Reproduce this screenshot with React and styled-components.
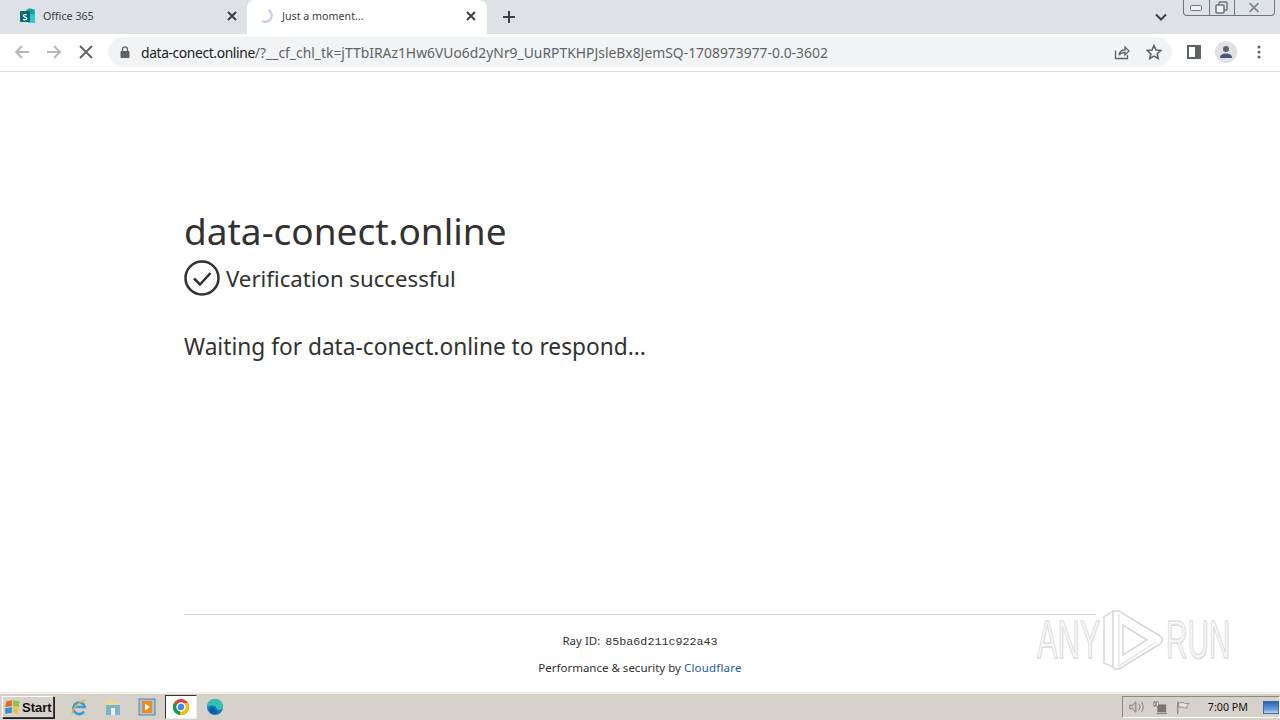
import styled, { createGlobalStyle } from 'styled-components';

const GlobalStyle = createGlobalStyle`
  html, body {
    margin: 0;
    padding: 0;
    height: 100%;
    overflow: hidden;
    background: #fff;
  }
  #root {
    height: 100%;
  }
`;

const UI_FONT = `"Noto Sans", "Open Sans", sans-serif`;

const Screen = styled.div`
  width: 1280px;
  height: 720px;
  display: flex;
  flex-direction: column;
  font-family: ${UI_FONT};
  position: relative;
  overflow: hidden;
`;

const TabStrip = styled.div`
  height: 34px;
  flex: none;
  background: #dee1e6;
  display: flex;
  align-items: flex-end;
  padding-left: 8px;
  position: relative;
`;

const Tab = styled.div`
  width: 240px;
  height: 34px;
  display: flex;
  align-items: center;
  padding: 0 8px 2px 12px;
  margin-left: ${({ $active }) => ($active ? '-1px' : '0')};
  box-sizing: border-box;
  border-radius: 8px 8px 0 0;
  background: ${({ $active }) => ($active ? '#fff' : 'transparent')};
  gap: 7px;
`;

const TabTitle = styled.span`
  flex: 1;
  font-size: 10.7px;
  color: #3c4043;
  white-space: nowrap;
`;

const CloseTab = styled.svg`
  width: 10px;
  height: 10px;
  flex: none;
  margin-right: 3px;
`;

const NewTab = styled.svg`
  width: 14px;
  height: 14px;
  align-self: center;
  margin-left: 15px;
`;

const TabListArrow = styled.svg`
  position: absolute;
  left: 1155px;
  top: 13px;
  width: 12px;
  height: 8px;
`;

const WindowControls = styled.div`
  position: absolute;
  left: 1183px;
  top: 0;
  width: 92px;
  height: 16px;
  box-sizing: border-box;
  border: 1px solid #70757c;
  border-top: none;
  border-radius: 0 0 4px 4px;
  display: grid;
  grid-template-columns: 25px 25px 1fr;
  align-items: center;
  justify-items: center;
`;

const ControlCell = styled.div`
  height: 100%;
  width: 100%;
  display: flex;
  align-items: center;
  justify-content: center;
  border-right: ${({ $last }) => ($last ? 'none' : '1px solid #70757c')};
`;

const Toolbar = styled.div`
  height: 38px;
  flex: none;
  box-sizing: border-box;
  background: #fff;
  border-bottom: 1px solid #dadce0;
  display: flex;
  align-items: center;
  padding: 0 0 2px 14px;
`;

const NavIcon = styled.svg`
  width: 16px;
  height: 16px;
  flex: none;
  margin-right: ${({ $gap }) => $gap || 16}px;
`;

const Omnibox = styled.div`
  width: 1064px;
  height: 30px;
  flex: none;
  box-sizing: border-box;
  border-radius: 15px;
  background: #f1f3f4;
  display: flex;
  align-items: center;
  padding: 0 10px 0 12px;
  margin-left: -1px;
`;

const Url = styled.div`
  flex: 1;
  margin-left: 11px;
  padding-top: 2px;
  font-size: 13.85px;
  letter-spacing: 0.02px;
  color: #5f6368;
  white-space: nowrap;
  overflow: hidden;
`;

const UrlHost = styled.span`
  color: #202124;
  letter-spacing: -0.38px;
`;

const OmniActions = styled.div`
  display: flex;
  align-items: center;
  gap: 16px;
`;

const ToolActions = styled.div`
  display: flex;
  align-items: center;
  gap: 14px;
  margin-left: 15px;
`;

const Avatar = styled.div`
  width: 22px;
  height: 22px;
  border-radius: 50%;
  background: #dfe1e5;
  display: flex;
  align-items: center;
  justify-content: center;
`;

const Page = styled.main`
  flex: 1;
  display: flex;
  flex-direction: column;
  background: #fff;
  padding: 134px 184px 0;
  color: #313131;
  min-height: 0;
`;

const Heading = styled.h1`
  margin: 0;
  font-size: 37px;
  line-height: 50px;
  font-weight: 400;
`;

const StatusRow = styled.div`
  display: flex;
  align-items: center;
  gap: 6px;
  margin-top: 2px;
  height: 40px;
`;

const StatusText = styled.span`
  font-size: 22.2px;
`;

const Waiting = styled.p`
  margin: 33px 0 0;
  font-size: 22.7px;
  line-height: 32px;
`;

const Footer = styled.footer`
  margin-top: auto;
  border-top: 1px solid #d9d9d9;
  margin-bottom: 15px;
  padding-top: 17px;
  text-align: center;
  font-size: 11.5px;
  color: #313131;
`;

const FooterLine = styled.div`
  line-height: 18px;
  margin-bottom: 8px;
  &:last-child {
    margin-bottom: 0;
  }
`;

const RayCode = styled.code`
  font-family: "Liberation Mono", monospace;
  font-size: 11.7px;
  margin-left: 2px;
`;

const FooterLink = styled.a`
  color: #1d5d9d;
  letter-spacing: 0.2px;
  text-decoration: none;
`;

const Watermark = styled.div`
  position: absolute;
  left: 1037px;
  top: 608px;
  display: flex;
  align-items: center;
  gap: 2px;
`;

const WatermarkText = styled.span`
  display: block;
  font-family: "Liberation Sans", sans-serif;
  font-size: 53px;
  line-height: 64px;
  transform: scaleX(${({ $scale }) => $scale});
  transform-origin: left;
  width: ${({ $width }) => $width}px;
  color: #f6f6f6;
  -webkit-text-stroke: 1px #d6d6d6;
  text-shadow: 1px 1px 0 #e6e6e6;
`;

const Taskbar = styled.div`
  height: 28px;
  flex: none;
  box-sizing: border-box;
  background: #d6d2ca;
  border-top: 2px solid #f1efe9;
  display: flex;
  align-items: center;
  padding-left: 2px;
`;

const StartButton = styled.div`
  width: 52px;
  height: 22px;
  box-sizing: border-box;
  border: 1px solid;
  border-color: #fff #404040 #404040 #fff;
  box-shadow: 1px 1px 0 #222;
  display: flex;
  align-items: center;
  padding-left: 1px;
  font-family: "Liberation Sans", sans-serif;
  font-weight: 700;
  font-size: 13px;
  color: #111;
`;

const QuickIcons = styled.div`
  display: flex;
  align-items: center;
  margin-left: 8px;
`;

const TaskSlot = styled.div`
  width: ${({ $active }) => ($active ? '32px' : '34px')};
  height: 24px;
  margin: ${({ $active }) => ($active ? '0 1px' : '0')};
  box-sizing: border-box;
  display: flex;
  align-items: center;
  justify-content: center;
  background: ${({ $active }) => ($active ? '#fff' : 'transparent')};
  border: ${({ $active }) => ($active ? '1px solid' : 'none')};
  border-color: #333 #eee #eee #333;
`;

const Tray = styled.div`
  margin-left: auto;
  width: 158px;
  height: 22px;
  box-sizing: border-box;
  border: 1px solid;
  border-color: #8d8a84 #fff #fff #8d8a84;
  display: flex;
  align-items: center;
  padding-left: 5px;
  gap: 9px;
`;

const Clock = styled.span`
  font-family: "Noto Sans", sans-serif;
  font-size: 10.7px;
  color: #111;
  margin-left: 9px;
  white-space: nowrap;
`;

const DesktopPeek = styled.div`
  width: 16px;
  height: 11px;
  margin-left: 6px;
  background: linear-gradient(#2b63b8, #6d9ddb 70%, #c7d8ea);
  border: 1px solid #3b6aa8;
`;

const X = ({ color = '#3c4043', width = 2 }) => (
  <path d="M1 1L9 9M9 1L1 9" stroke={color} strokeWidth={width} fill="none" />
);

const App = () => (
  <Screen>
    <GlobalStyle />
    <TabStrip>
      <Tab>
        <svg width="16" height="16" viewBox="0 0 16 16" style={{ flex: 'none' }}>
          <path d="M8 1h7v14H8z" fill="#37c6d0" />
          <circle cx="10" cy="5" r="4.5" fill="#1a9ba1" />
          <circle cx="11" cy="10" r="4" fill="#37c6d0" />
          <rect x="0" y="3" width="10" height="11" rx="1" fill="#036c70" />
          <path d="M3 11.3c2 1 4 .4 3.8-1 -.2-1.6-3.4-1-3.4-2.5 0-1.2 2-1.4 3.4-.8" stroke="#fff" strokeWidth="1.3" fill="none" />
        </svg>
        <TabTitle>Office 365</TabTitle>
        <CloseTab viewBox="0 0 10 10"><X /></CloseTab>
      </Tab>
      <Tab $active>
        <svg width="16" height="16" viewBox="0 0 16 16" style={{ flex: 'none' }}>
          <path d="M9.500 1.700A6.500 6.500 0 0 1 3 13" stroke="#c5cdf0" strokeWidth="2.200" fill="none" />
        </svg>
        <TabTitle>Just a moment...</TabTitle>
        <CloseTab viewBox="0 0 10 10"><X /></CloseTab>
      </Tab>
      <NewTab viewBox="0 0 14 14">
        <path d="M7 1v12M1 7h12" stroke="#3c4043" strokeWidth="2" />
      </NewTab>
      <TabListArrow viewBox="0 0 12 8">
        <path d="M1 1.5l5 5 5-5" stroke="#3c4043" strokeWidth="2" fill="none" />
      </TabListArrow>
      <WindowControls>
        <ControlCell>
          <svg width="12" height="6" viewBox="0 0 12 6"><rect x="0.5" y="0.5" width="11" height="5" rx="1" fill="#eef0f3" stroke="#70757c" /></svg>
        </ControlCell>
        <ControlCell>
          <svg width="13" height="13" viewBox="0 0 13 13"><rect x="4" y="1" width="8" height="8" rx="1" fill="none" stroke="#70757c" strokeWidth="1.5" /><rect x="1" y="4" width="8" height="8" rx="1" fill="#eef0f3" stroke="#70757c" strokeWidth="1.5" /></svg>
        </ControlCell>
        <ControlCell $last>
          <svg width="14" height="11" viewBox="0 0 10 10"><X color="#80858c" width={1.6} /></svg>
        </ControlCell>
      </WindowControls>
    </TabStrip>
    <Toolbar>
      <NavIcon viewBox="0 0 16 16">
        <path d="M15 8H2M8 2L2 8l6 6" stroke="#b4b7bb" strokeWidth="1.8" fill="none" />
      </NavIcon>
      <NavIcon viewBox="0 0 16 16">
        <path d="M1 8h13M8 2l6 6-6 6" stroke="#b4b7bb" strokeWidth="1.8" fill="none" />
      </NavIcon>
      <NavIcon viewBox="0 0 16 16" $gap={15}>
        <path d="M2 2l12 12M14 2L2 14" stroke="#5f6368" strokeWidth="2" fill="none" />
      </NavIcon>
      <Omnibox>
        <svg width="10" height="12" viewBox="0 0 10 12" style={{ flex: 'none' }}>
          <rect x="0.5" y="5" width="9" height="7" rx="1" fill="#5f6368" />
          <path d="M2.5 5V3.3a2.5 2.5 0 0 1 5 0V5" stroke="#5f6368" strokeWidth="1.3" fill="none" />
        </svg>
        <Url>
          <UrlHost>data-conect.online</UrlHost>/?__cf_chl_tk=jTTbIRAz1Hw6VUo6d2yNr9_UuRPTKHPJsleBx8JemSQ-1708973977-0.0-3602
        </Url>
        <OmniActions>
          <svg width="16" height="16" viewBox="0 0 16 16">
            <path d="M1.5 6.5v8h12V11" stroke="#5f6368" strokeWidth="1.3" fill="none" />
            <path d="M5 11c.5-3.500 3-5 6-5V3l4 4-4 4V8.500c-2.500 0-4.500.5-6 2.500z" stroke="#5f6368" strokeWidth="1.3" fill="none" />
          </svg>
          <svg width="16" height="16" viewBox="0 0 16 16">
            <path d="M8 1.500l2 4.500 4.800.5-3.600 3.200 1 4.800L8 12.100l-4.200 2.400 1-4.800L1.200 6.500 6 6z" stroke="#5f6368" strokeWidth="1.6" fill="none" />
          </svg>
        </OmniActions>
      </Omnibox>
      <ToolActions>
        <svg width="14" height="14" viewBox="0 0 14 14">
          <rect x="1" y="1" width="12" height="12" fill="none" stroke="#5f6368" strokeWidth="2" />
          <rect x="8" y="1" width="5" height="12" fill="#5f6368" />
        </svg>
        <Avatar>
          <svg width="14" height="14" viewBox="0 0 14 14">
            <circle cx="7" cy="4" r="3" fill="#5f6368" />
            <path d="M1 13c0-3.500 3-4.500 6-4.500s6 1 6 4.500z" fill="#47597a" />
          </svg>
        </Avatar>
        <svg width="4" height="14" viewBox="0 0 4 14" style={{ marginLeft: 6 }}>
          <circle cx="2" cy="2" r="1.500" fill="#5f6368" />
          <circle cx="2" cy="7" r="1.500" fill="#5f6368" />
          <circle cx="2" cy="12" r="1.500" fill="#5f6368" />
        </svg>
      </ToolActions>
    </Toolbar>
    <Page>
      <Heading>data-conect.online</Heading>
      <StatusRow>
        <svg width="36" height="36" viewBox="0 0 36 36" style={{ flex: 'none' }}>
          <circle cx="18" cy="18" r="16.500" fill="none" stroke="#313131" strokeWidth="2.500" />
          <path d="M10 18.500l6 6 10.500-11.500" fill="none" stroke="#313131" strokeWidth="2.500" />
        </svg>
        <StatusText>Verification successful</StatusText>
      </StatusRow>
      <Waiting>Waiting for data-conect.online to respond...</Waiting>
      <Footer>
        <FooterLine>Ray ID: <RayCode>85ba6d211c922a43</RayCode></FooterLine>
        <FooterLine>Performance &amp; security by <FooterLink href="#">Cloudflare</FooterLink></FooterLine>
      </Footer>
    </Page>
    <Watermark>
      <WatermarkText $scale={0.58} $width={63}>ANY</WatermarkText>
      <svg width="62" height="64" viewBox="0 0 62 64">
        <path d="M11 3h6l41 25c3 2 3 6 0 8L17 61h-4l-2-2z" fill="none" stroke="#d6d6d6" strokeWidth="1.500" />
        <path d="M11 3L2 9v46l9 4" fill="none" stroke="#d6d6d6" strokeWidth="1.500" />
        <path d="M21 17v30l24-15z" fill="none" stroke="#d6d6d6" strokeWidth="1.500" />
        <path d="M17 6v52l37-24" fill="none" stroke="#e8e8e8" strokeWidth="1.500" />
      </svg>
      <WatermarkText $scale={0.56} $width={64}>RUN</WatermarkText>
    </Watermark>
    <Taskbar>
      <StartButton>
        <svg width="18" height="18" viewBox="0 0 16 16">
          <path d="M2 3l5-1v5l-6 1z" fill="#e8622a" />
          <path d="M8 2l6 1-1 5-5-1z" fill="#8cc63f" />
          <path d="M1 9l6-1v5l-6 1z" fill="#3a8fd8" />
          <path d="M8 8l5 1-1 5-4-1z" fill="#f4c430" />
        </svg>
        Start
      </StartButton>
      <QuickIcons>
        <TaskSlot>
          <svg width="18" height="18" viewBox="0 0 18 18">
            <path d="M14 13.500A5.800 5.800 0 1 1 14.800 9H4" fill="none" stroke="#3f9bd8" strokeWidth="2.600" />
            <path d="M2 16C3 9 10 3 16 2" stroke="#e5b53c" strokeWidth="1.300" fill="none" />
          </svg>
        </TaskSlot>
        <TaskSlot>
          <svg width="18" height="18" viewBox="0 0 18 18">
            <path d="M3 2h6l1 2h5v5H3z" fill="#ecd98c" />
            <rect x="2" y="7" width="14" height="10" fill="#7fb2cf" />
            <rect x="7" y="10" width="4" height="7" fill="#e8f0f3" />
          </svg>
        </TaskSlot>
        <TaskSlot>
          <svg width="18" height="18" viewBox="0 0 18 18">
            <rect x="1" y="1" width="16" height="16" fill="#a9c4dc" stroke="#5e83a6" />
            <rect x="4" y="3" width="10" height="12" fill="#f08a1d" />
            <path d="M7 5.500v7l5-3.500z" fill="#fff" />
          </svg>
        </TaskSlot>
        <TaskSlot $active>
          <svg width="18" height="18" viewBox="0 0 18 18">
            <circle cx="9" cy="9" r="8" fill="#db4437" />
            <path d="M9 9L2 5A8 8 0 0 0 8 17z" fill="#0f9d58" />
            <path d="M9 5h7a8 8 0 0 1-8 12z" fill="#fbbc05" />
            <circle cx="9" cy="9" r="4" fill="#4285f4" stroke="#fff" strokeWidth="1.500" />
          </svg>
        </TaskSlot>
        <TaskSlot>
          <svg width="18" height="18" viewBox="0 0 18 18">
            <circle cx="9" cy="9" r="8" fill="#1277c4" />
            <path d="M1 9a8 8 0 0 1 16 0c0 2-2 3-4 3-3 0-2-3-4-4-3-1-6 0-8 1z" fill="#35c1b0" />
            <path d="M7 9c2 0 1 4 5 5-2 2-6 2-8 0-1-2 0-5 3-5z" fill="#0c59a4" />
          </svg>
        </TaskSlot>
      </QuickIcons>
      <Tray>
        <svg width="18" height="14" viewBox="0 0 18 14">
          <path d="M2 5h3l4-4v12L5 9H2z" fill="#c8c5be" stroke="#77756f" />
          <path d="M12 3c2 2 2 6 0 8M15 1c3 3 3 9 0 12" stroke="#77756f" fill="none" />
        </svg>
        <svg width="16" height="15" viewBox="0 0 16 15">
          <rect x="5" y="4" width="10" height="9" fill="#77756f" />
          <rect x="1" y="1" width="2" height="5" fill="#e9e9e9" stroke="#666" strokeWidth="0.7" />
          <rect x="4" y="1" width="2" height="5" fill="#e9e9e9" stroke="#666" strokeWidth="0.7" />
          <rect x="4" y="14" width="12" height="1" fill="#77756f" />
        </svg>
        <svg width="16" height="15" viewBox="0 0 16 15">
          <path d="M2 1v14" stroke="#77756f" strokeWidth="1.200" />
          <path d="M3 2h6l1 1h5l-3 3 1 2H9L8 7H3z" fill="#e4e2dc" stroke="#77756f" strokeWidth="0.800" />
        </svg>
        <Clock>7:00 PM</Clock>
        <DesktopPeek />
      </Tray>
    </Taskbar>
  </Screen>
);

export default App;
